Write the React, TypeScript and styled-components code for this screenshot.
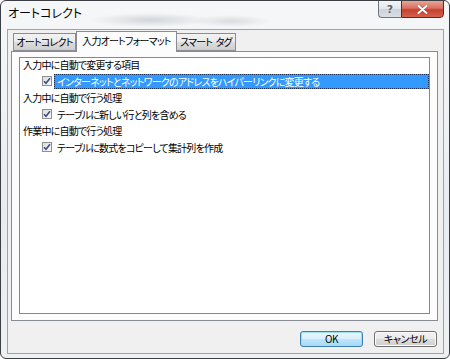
import styled, { createGlobalStyle } from "styled-components";

const GlobalStyle = createGlobalStyle`
  html, body {
    margin: 0;
    padding: 0;
    background: #ffffff;
  }
  body {
    font-family: "Noto Sans CJK JP", "Noto Sans", sans-serif;
    font-feature-settings: "palt";
  }
`;

const Window = styled.div`
  box-sizing: border-box;
  width: 450px;
  height: 359px;
  display: flex;
  flex-direction: column;
  border: 1px solid #3c3f44;
  border-radius: 6px;
  overflow: hidden;
  background:
    radial-gradient(ellipse 60px 7px at 150px 19px, rgba(120, 128, 140, 0.28), transparent),
    radial-gradient(ellipse 40px 6px at 230px 20px, rgba(120, 128, 140, 0.22), transparent),
    linear-gradient(180deg, #f6f7f8 0%, #e9ecef 60%, #eef0f2 100%);
`;

const TitleBar = styled.div`
  height: 28px;
  display: flex;
  align-items: flex-start;
  padding-left: 7px;
  flex-shrink: 0;
`;

const Title = styled.div`
  margin-top: 4px;
  font-size: 12px;
  line-height: 16px;
  color: #000;
`;

const CaptionButtons = styled.div`
  margin-left: auto;
  margin-right: 5px;
  display: flex;
  margin-top: -1px;
`;

const HelpButton = styled.div`
  box-sizing: border-box;
  width: 23px;
  height: 18px;
  border: 1px solid #6f757e;
  border-right: none;
  border-radius: 0 0 0 4px;
  background: linear-gradient(180deg, #f3f5f7 0%, #e1e5ea 50%, #cdd3da 51%, #d9dee4 100%);
  display: flex;
  align-items: center;
  justify-content: center;
  font-family: "DejaVu Sans", sans-serif;
  font-size: 11px;
  font-weight: bold;
  color: #5a6068;
  text-shadow: 0 0 2px #fff;
`;

const CloseButton = styled.div`
  box-sizing: border-box;
  width: 43px;
  height: 18px;
  border: 1px solid #5a2a23;
  border-radius: 0 0 4px 0;
  background: linear-gradient(180deg, #e9a596 0%, #d8705f 45%, #c8402f 55%, #d2624c 100%);
  display: flex;
  align-items: center;
  justify-content: center;
`;

const Client = styled.div`
  flex: 1;
  margin: 0 5px 4px 6px;
  border: 1px solid #9ea3aa;
  background: #f0f0f0;
  padding: 1px 5px 0 3px;
  display: flex;
  flex-direction: column;
`;

const TabRow = styled.div`
  display: flex;
  align-items: flex-end;
  padding-left: 2px;
  height: 20px;
  position: relative;
  z-index: 1;
`;

const Tab = styled.div<{ $w: number; $active?: boolean }>`
  box-sizing: border-box;
  width: ${(p) => p.$w}px;
  height: ${(p) => (p.$active ? 21 : 18)}px;
  margin-bottom: ${(p) => (p.$active ? -1 : 0)}px;
  border: 1px solid #898c95;
  border-bottom: ${(p) => (p.$active ? "none" : "1px solid #898c95")};
  border-left: ${(p) => (p.$active ? "1px solid #898c95" : "none")};
  &:first-child {
    border-left: 1px solid #898c95;
  }
  background: ${(p) =>
    p.$active ? "#fcfcfc" : "linear-gradient(180deg, #f2f2f2 0%, #ebebeb 50%, #dddddd 51%, #cfcfcf 100%)"};
  font-size: 10px;
  letter-spacing: -0.8px;
  word-spacing: 2px;
  line-height: 16px;
  padding-top: ${(p) => (p.$active ? 1 : 0)}px;
  text-align: center;
  color: #000;
  white-space: nowrap;
`;

const Panel = styled.div`
  box-sizing: border-box;
  height: 270px;
  border: 1px solid #898c95;
  background: #fcfcfc;
  padding: 5px 7px 6px 7px;
  display: flex;
`;

const ListBox = styled.div`
  flex: 1;
  border: 1px solid #828790;
  background: #ffffff;
  padding: 0 0 0 3px;
`;

const HeaderRow = styled.div`
  box-sizing: border-box;
  height: 16.5px;
  padding-bottom: 3px;
  display: flex;
  align-items: center;
  font-size: 10px;
  letter-spacing: -0.8px;
  color: #000;
  white-space: nowrap;
`;

const ItemRow = styled.div`
  box-sizing: border-box;
  height: 16.5px;
  padding-bottom: 3px;
  display: flex;
  align-items: center;
  padding-left: 19px;
  font-size: 10px;
  letter-spacing: -0.8px;
  white-space: nowrap;
`;

const Box = styled.div`
  box-sizing: border-box;
  width: 10px;
  height: 10px;
  border: 1px solid #8e8f8f;
  background: linear-gradient(135deg, #dcdcdc 0%, #fbfbfb 100%);
  display: flex;
  align-items: center;
  justify-content: center;
  flex-shrink: 0;
`;

const Label = styled.div<{ $selected?: boolean }>`
  box-sizing: border-box;
  margin-left: 2px;
  height: 15px;
  line-height: 13px;
  padding: 0 2px;
  color: ${(p) => (p.$selected ? "#ffffff" : "#000")};
  background: ${(p) => (p.$selected ? "#3399ff" : "transparent")};
  border: 1px ${(p) => (p.$selected ? "dotted #1a2f55" : "solid transparent")};
  flex: ${(p) => (p.$selected ? 1 : "none")};
`;

const Footer = styled.div`
  display: flex;
  justify-content: flex-end;
  gap: 11px;
  padding-top: 10px;
  padding-right: 1px;
`;

const Button = styled.div<{ $default?: boolean }>`
  box-sizing: border-box;
  width: 63px;
  height: 16px;
  border: 1px solid ${(p) => (p.$default ? "#3c7fb1" : "#707070")};
  border-radius: 3px;
  background: ${(p) =>
    p.$default
      ? "linear-gradient(180deg, #eaf6fd 0%, #d9f0fc 50%, #bee6fd 51%, #a7d9f5 100%)"
      : "linear-gradient(180deg, #f2f2f2 0%, #ebebeb 50%, #dddddd 51%, #cfcfcf 100%)"};
  box-shadow: ${(p) => (p.$default ? "inset 0 0 0 1px #9fdcf6" : "inset 0 0 0 1px #fbfbfb")};
  font-size: 10px;
  letter-spacing: -0.4px;
  line-height: 14px;
  text-align: center;
  color: #000;
`;

function Check() {
  return (
    <svg width="8" height="8" viewBox="0 0 8 8">
      <path d="M1 4.2 L3 6.3 L7 1.2" fill="none" stroke="#3b4f86" strokeWidth="1.6" />
    </svg>
  );
}

function CloseGlyph() {
  return (
    <svg width="11" height="9" viewBox="0 0 11 9">
      <path d="M1.5 1 L9.5 8 M9.5 1 L1.5 8" stroke="#5a1f18" strokeWidth="3" strokeLinecap="round" opacity="0.35" />
      <path d="M1.5 1 L9.5 8 M9.5 1 L1.5 8" stroke="#ffffff" strokeWidth="2" strokeLinecap="round" />
    </svg>
  );
}

const sections = [
  {
    title: "入力中に自動で変更する項目",
    items: [{ text: "インターネットとネットワークのアドレスをハイパーリンクに変更する", selected: true }],
  },
  {
    title: "入力中に自動で行う処理",
    items: [{ text: "テーブルに新しい行と列を含める", selected: false }],
  },
  {
    title: "作業中に自動で行う処理",
    items: [{ text: "テーブルに数式をコピーして集計列を作成", selected: false }],
  },
];

export default function App() {
  return (
    <>
      <GlobalStyle />
      <Window>
        <TitleBar>
          <Title>オートコレクト</Title>
          <CaptionButtons>
            <HelpButton>?</HelpButton>
            <CloseButton>
              <CloseGlyph />
            </CloseButton>
          </CaptionButtons>
        </TitleBar>
        <Client>
          <TabRow>
            <Tab $w={63}>オートコレクト</Tab>
            <Tab $w={101} $active>
              入力オートフォーマット
            </Tab>
            <Tab $w={59}>スマート タグ</Tab>
          </TabRow>
          <Panel>
            <ListBox>
              {sections.map((s) => (
                <div key={s.title}>
                  <HeaderRow>{s.title}</HeaderRow>
                  {s.items.map((it) => (
                    <ItemRow key={it.text}>
                      <Box>
                        <Check />
                      </Box>
                      <Label $selected={it.selected}>{it.text}</Label>
                    </ItemRow>
                  ))}
                </div>
              ))}
            </ListBox>
          </Panel>
          <Footer>
            <Button $default>OK</Button>
            <Button>キャンセル</Button>
          </Footer>
        </Client>
      </Window>
    </>
  );
}
